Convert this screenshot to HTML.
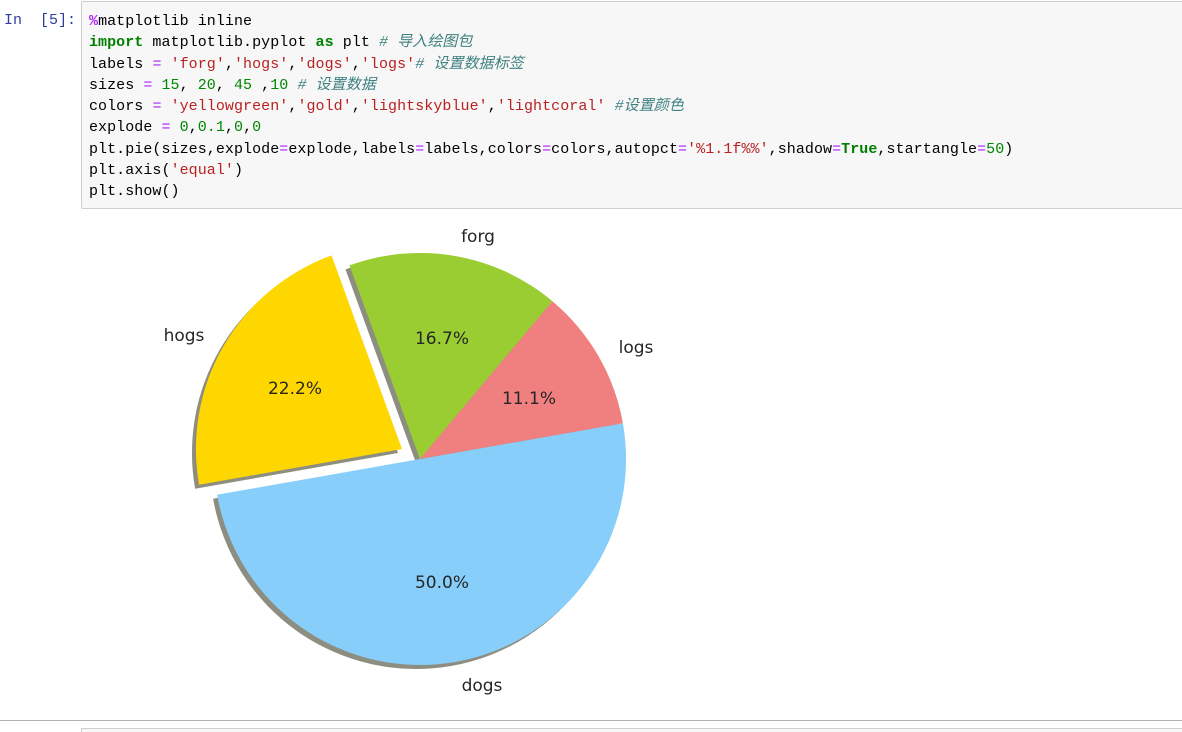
<!DOCTYPE html>
<html><head><meta charset="utf-8"><style>
html{overflow:hidden;height:732px}
body{margin:0;width:1182px;height:732px;background:#fff;position:relative;overflow:hidden;font-family:"Liberation Mono","Noto Sans CJK SC",monospace}
.prompt{position:absolute;left:4px;top:10px;font-size:15px;color:#303f9f;line-height:21px}
.cell{position:absolute;left:81px;top:1px;width:1110px;height:206px;background:#f7f7f7;border:1px solid #cfcfcf;border-radius:2px}
pre{margin:0;position:absolute;left:7px;top:9px;font-family:"Liberation Mono","Noto Sans CJK SC",monospace;font-size:15px;line-height:21.3px;color:#000;letter-spacing:0.06px}
.k{color:#008000;font-weight:bold}.s{color:#ba2121}.n{color:#080}.o{color:#aa22ff}.c{color:#408080;font-style:italic}.m{color:#aa22ff;font-weight:bold}
.sep{position:absolute;left:0;top:720px;width:1182px;height:1px;background:#b0b0b0}
.cell2{position:absolute;left:81px;top:728px;width:1110px;height:10px;border:1px solid #cfcfcf;background:#f7f7f7}
</style></head><body>
<div class="prompt">In&nbsp; [5]:</div>
<div class="cell"><pre><span class="m">%</span>matplotlib inline
<span class="k">import</span> matplotlib.pyplot <span class="k">as</span> plt <span class="c"># 导入绘图包</span>
labels <span class="o">=</span> <span class="s">'forg'</span>,<span class="s">'hogs'</span>,<span class="s">'dogs'</span>,<span class="s">'logs'</span><span class="c"># 设置数据标签</span>
sizes <span class="o">=</span> <span class="n">15</span>, <span class="n">20</span>, <span class="n">45</span> ,<span class="n">10</span> <span class="c"># 设置数据</span>
colors <span class="o">=</span> <span class="s">'yellowgreen'</span>,<span class="s">'gold'</span>,<span class="s">'lightskyblue'</span>,<span class="s">'lightcoral'</span> <span class="c">#设置颜色</span>
explode <span class="o">=</span> <span class="n">0</span>,<span class="n">0.1</span>,<span class="n">0</span>,<span class="n">0</span>
plt.pie(sizes,explode<span class="o">=</span>explode,labels<span class="o">=</span>labels,colors<span class="o">=</span>colors,autopct<span class="o">=</span><span class="s">'%1.1f%%'</span>,shadow<span class="o">=</span><span class="k">True</span>,startangle<span class="o">=</span><span class="n">50</span>)
plt.axis(<span class="s">'equal'</span>)
plt.show()</pre></div>
<svg style="position:absolute;left:0;top:0" width="1182" height="732">
<g transform="translate(-4,4)" fill="#8e8e80">
<path d="M420 459 L552.4 301.2 A206 206 0 0 0 349.5 265.4 Z"/>
<path d="M402 449 L331.5 255.4 A206 206 0 0 0 199.1 484.8 Z"/>
<path d="M420 459 L217.1 494.8 A206 206 0 0 0 622.9 423.2 Z"/>
<path d="M420 459 L622.9 423.2 A206 206 0 0 0 552.4 301.2 Z"/>
</g>
<path d="M420 459 L552.4 301.2 A206 206 0 0 0 349.5 265.4 Z" fill="#9acd32"/>
<path d="M402 449 L331.5 255.4 A206 206 0 0 0 199.1 484.8 Z" fill="#ffd700"/>
<path d="M420 459 L217.1 494.8 A206 206 0 0 0 622.9 423.2 Z" fill="#87cefa"/>
<path d="M420 459 L622.9 423.2 A206 206 0 0 0 552.4 301.2 Z" fill="#f08080"/>
<g font-family="DejaVu Sans, sans-serif" font-size="17" fill="#262626" text-anchor="middle">
<text x="478" y="242">forg</text>
<text x="184" y="341">hogs</text>
<text x="636" y="353">logs</text>
<text x="482" y="691">dogs</text>
<text x="442" y="344">16.7%</text>
<text x="295" y="394">22.2%</text>
<text x="529" y="404">11.1%</text>
<text x="442" y="588">50.0%</text>
</g>
</svg>
<div class="sep"></div>
<div class="cell2"></div>
</body></html>
